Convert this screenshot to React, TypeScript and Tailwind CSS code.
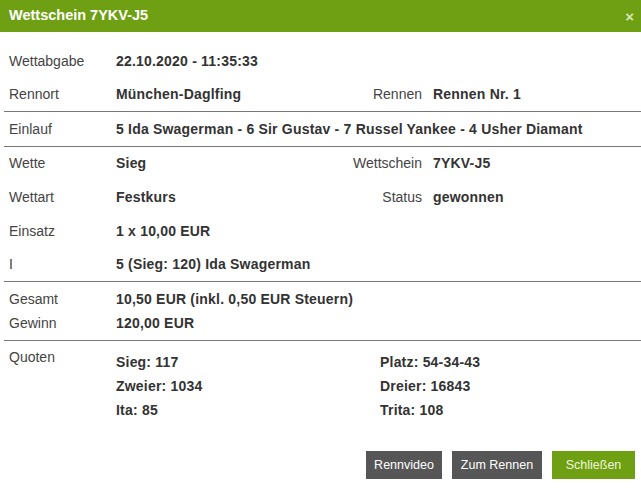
import { ReactNode } from "react";

function Row({ label, value, h = "h-[34px]", right }: { label: string; value: ReactNode; h?: string; right?: [string, string] }) {
  return (
    <div className={`flex items-center ${h}`}>
      <div className="w-[116px] shrink-0 pl-[9px] text-[#444]">{label}</div>
      <div className="w-[227px] shrink-0 font-bold tracking-[0.2px] text-[#333] whitespace-nowrap">{value}</div>
      {right && (
        <>
          <div className="w-[79px] shrink-0 text-right text-[#444]">{right[0]}</div>
          <div className="pl-[11px] font-bold tracking-[0.2px] text-[#333]">{right[1]}</div>
        </>
      )}
    </div>
  );
}

export default function App() {
  return (
    <div className="w-[641px] h-[492px] bg-white text-[14px] overflow-hidden" style={{ fontFamily: '"Liberation Sans", Arial, sans-serif' }}>
      {/* Header */}
      <div className="h-8 bg-[#6fa013] flex items-center justify-between pl-[9px] pr-[7px]">
        <span className="text-white font-bold text-[14.5px]">Wettschein 7YKV-J5</span>
        <span className="text-[#d6e8b6] font-bold text-[15px] leading-none">×</span>
      </div>

      <div className="pt-[13px]">
        <Row label="Wettabgabe" value="22.10.2020 - 11:35:33" h="h-[33px]" />
        <Row label="Rennort" value="München-Daglfing" h="h-[33px]" right={["Rennen", "Rennen Nr. 1"]} />
      </div>

      <div className="ml-1 border-t border-[#777]">
        <div className="-ml-1">
          <div className="flex items-center h-[34px]">
            <div className="w-[116px] shrink-0 pl-[9px] text-[#444]">Einlauf</div>
            <div className="font-bold tracking-[0.2px] text-[#333] whitespace-nowrap">
              5 Ida Swagerman - 6 Sir Gustav - 7 Russel Yankee - 4 Usher Diamant
            </div>
          </div>
        </div>
      </div>

      <div className="ml-1 border-t border-[#777]">
        <div className="-ml-1">
          <Row label="Wette" value="Sieg" h="h-[33px]" right={["Wettschein", "7YKV-J5"]} />
          <Row label="Wettart" value="Festkurs" right={["Status", "gewonnen"]} />
          <Row label="Einsatz" value="1 x 10,00 EUR" />
          <Row label="I" value="5 (Sieg: 120) Ida Swagerman" h="h-[33px]" />
        </div>
      </div>

      <div className="ml-1 border-t border-[#777]">
        <div className="-ml-1 pt-[5px] pb-[5px]">
          <Row label="Gesamt" value="10,50 EUR (inkl. 0,50 EUR Steuern)" h="h-6" />
          <Row label="Gewinn" value="120,00 EUR" h="h-6" />
        </div>
      </div>

      <div className="ml-1 border-t border-[#777]">
        <div className="-ml-1 pt-1 flex">
          <div className="w-[116px] shrink-0 pl-[9px] text-[#444] h-6 flex items-center">Quoten</div>
          <div className="grid grid-cols-[264px_1fr] mt-[5px] font-bold tracking-[0.2px] text-[#333]">
            <div className="h-6 flex items-center">Sieg: 117</div>
            <div className="h-6 flex items-center">Platz: 54-34-43</div>
            <div className="h-6 flex items-center">Zweier: 1034</div>
            <div className="h-6 flex items-center">Dreier: 16843</div>
            <div className="h-6 flex items-center">Ita: 85</div>
            <div className="h-6 flex items-center">Trita: 108</div>
          </div>
        </div>
      </div>

      {/* Buttons */}
      <div className="flex justify-end gap-[10px] pr-[6px] mt-[29px]">
        <button className="w-[76px] h-7 bg-[#565656] text-white text-[12.5px]">Rennvideo</button>
        <button className="w-[90px] h-7 bg-[#565656] text-white text-[12.5px]">Zum Rennen</button>
        <button className="w-[83px] h-7 bg-[#6fa013] text-[#eef7dc] text-[12.5px]">Schließen</button>
      </div>
    </div>
  );
}
